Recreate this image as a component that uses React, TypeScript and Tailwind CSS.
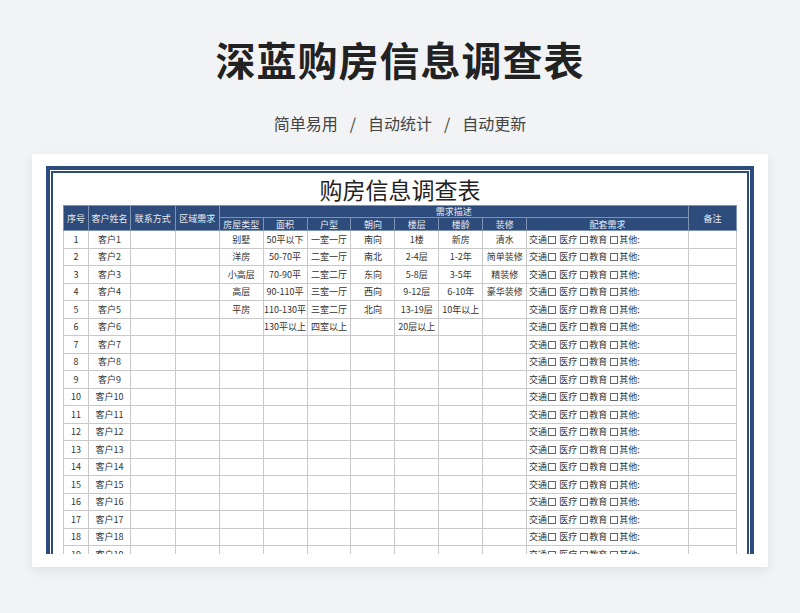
import React from "react";

const rows = [
  ["别墅", "50平以下", "一室一厅", "南向", "1楼", "新房", "清水"],
  ["洋房", "50-70平", "二室一厅", "南北", "2-4层", "1-2年", "简单装修"],
  ["小高层", "70-90平", "二室二厅", "东向", "5-8层", "3-5年", "精装修"],
  ["高层", "90-110平", "三室一厅", "西向", "9-12层", "6-10年", "豪华装修"],
  ["平房", "110-130平", "三室二厅", "北向", "13-19层", "10年以上", ""],
  ["", "130平以上", "四室以上", "", "20层以上", "", ""],
];

const widths = [25, 42, 45, 44, 44, 44, 44, 44, 44, 44, 44, 162, 48];

function Box() {
  return <span className="inline-block w-[8px] h-[8px] border border-[#666] align-[-1px] mx-[1px]" />;
}

export default function App() {
  const cell = "border border-[#c9c9c9] h-[17.5px] text-center p-0";
  const head = "border border-[#7f93b3] bg-[#2d4b7b] text-[#e6ecf5] font-normal p-0";
  return (
    <div className="w-[800px] h-[613px] bg-[#f1f3f5] overflow-hidden flex flex-col items-center" style={{ fontFamily: '"Noto Sans CJK SC", "Noto Sans", sans-serif' }}>
      <h1 className="mt-[33px] text-[40px] leading-[52px] font-bold text-[#222] tracking-[1px]">深蓝购房信息调查表</h1>
      <p className="mt-[27px] text-[16px] leading-[22px] text-[#444] flex gap-[12px]">
        <span>简单易用</span><span>/</span><span>自动统计</span><span>/</span><span>自动更新</span>
      </p>
      <div className="mt-[20px] w-[736px] h-[413px] bg-white shadow-[0_4px_10px_rgba(0,0,0,0.08)] pt-[12px] pl-[14px] pr-[14px]">
        <div className="h-[388px] border-x-4 border-t-4 border-[#2d4b7b] p-[1px] pb-0 overflow-hidden">
          <div className="h-full border-x-2 border-t-2 border-[#2d4b7b] pl-[10px] pr-[10px] overflow-hidden">
            <div className="text-center text-[23px] leading-[30px] mt-[1px] text-[#222]">购房信息调查表</div>
            <table className="table-fixed border-collapse text-[9px] leading-none text-[#333] mt-[1px]">
              <colgroup>
                {widths.map((w, i) => (
                  <col key={i} style={{ width: w }} />
                ))}
              </colgroup>
              <thead>
                <tr className="h-[12px]">
                  <th rowSpan={2} className={head}>序号</th>
                  <th rowSpan={2} className={head}>客户姓名</th>
                  <th rowSpan={2} className={head}>联系方式</th>
                  <th rowSpan={2} className={head}>区域需求</th>
                  <th colSpan={8} className={head}>需求描述</th>
                  <th rowSpan={2} className={head}>备注</th>
                </tr>
                <tr className="h-[13px]">
                  {["房屋类型", "面积", "户型", "朝向", "楼层", "楼龄", "装修", "配套需求"].map((t) => (
                    <th key={t} className={head}>{t}</th>
                  ))}
                </tr>
              </thead>
              <tbody>
                {Array.from({ length: 19 }).map((_, i) => {
                  const r = rows[i] || ["", "", "", "", "", "", ""];
                  return (
                    <tr key={i}>
                      <td className={cell}>{i + 1}</td>
                      <td className={cell}>客户{i + 1}</td>
                      <td className={cell}></td>
                      <td className={cell}></td>
                      {r.map((v, j) => (
                        <td key={j} className={cell}>{v}</td>
                      ))}
                      <td className={cell + " text-left pl-[2px] whitespace-nowrap"}>
                        交通<Box /> 医疗 <Box />教育 <Box />其他:
                      </td>
                      <td className={cell}></td>
                    </tr>
                  );
                })}
              </tbody>
            </table>
          </div>
        </div>
      </div>
    </div>
  );
}
